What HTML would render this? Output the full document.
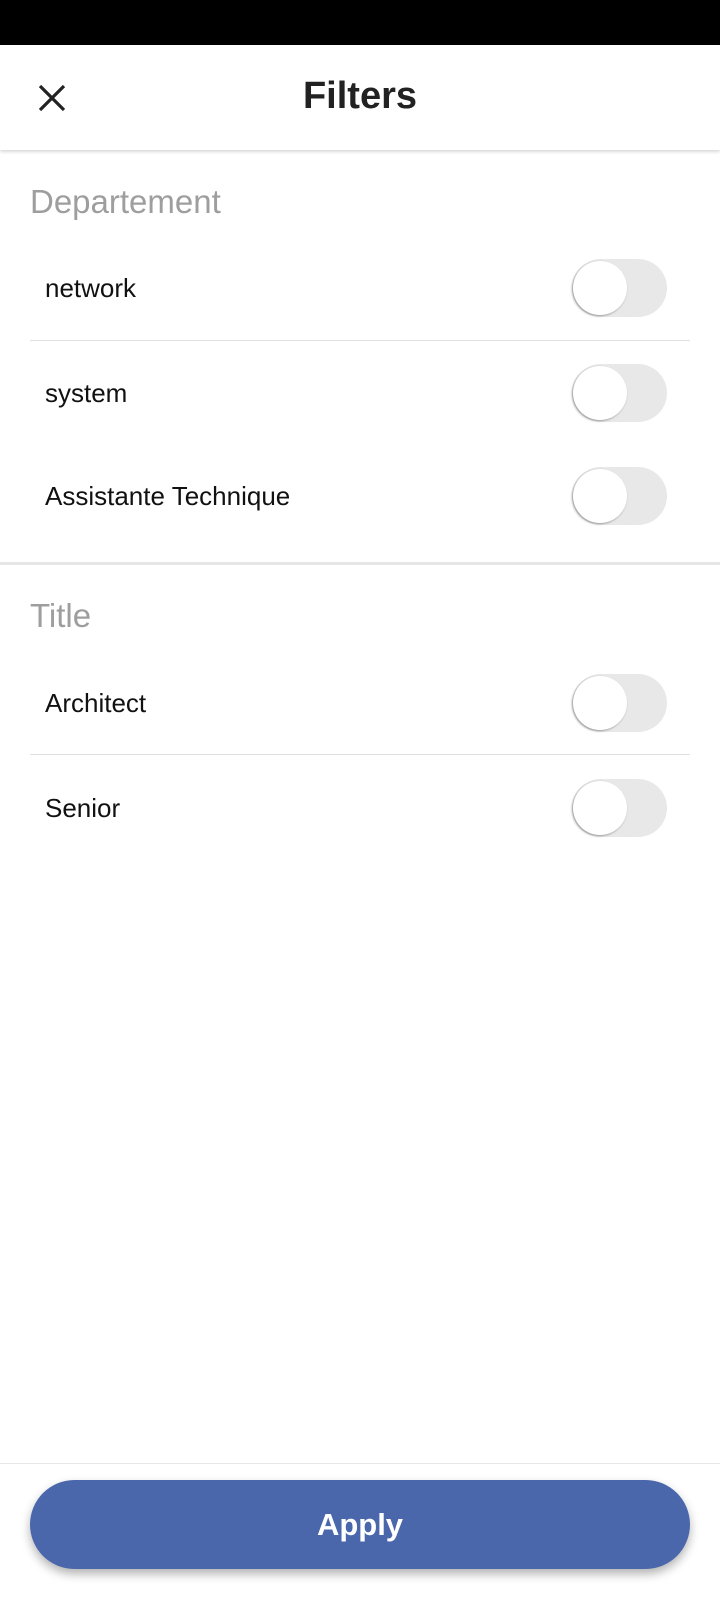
<!DOCTYPE html>
<html><head><style>
body{margin:0;width:720px;height:1600px;background:#fff;font-family:"Liberation Sans",sans-serif;position:relative;overflow:hidden}
.abs{position:absolute}
.status{left:0;top:0;width:720px;height:45px;background:#000}
.header{left:0;top:45px;width:720px;height:105px;background:#fff;box-shadow:0 2px 3px rgba(0,0,0,.15)}
.title{left:0;width:720px;top:72px;text-align:center;font-size:38px;font-weight:bold;color:#222;line-height:48px}
.sec{left:30px;font-size:33px;color:#9e9e9e;line-height:40px}
.row{left:45px;font-size:26px;color:#111;line-height:30px}
.div{left:30px;width:660px;height:1px;background:#e0e0e0}
.tog{left:572px;width:95px;height:58px;border-radius:29px;background:#e8e8e8}
.tog:after{content:"";position:absolute;left:1px;top:2px;width:54px;height:54px;border-radius:50%;background:#fff;box-shadow:-1px 1px 2px rgba(0,0,0,.35)}
.btn{left:30px;top:1480px;width:660px;height:89px;border-radius:45px;background:#4a67ab;box-shadow:0 5px 10px rgba(0,0,0,.3);color:#fff;font-size:31px;font-weight:bold;text-align:center;line-height:89px}
</style></head><body>
<div class="abs status"></div>
<div class="abs header"></div>
<svg class="abs" style="left:36px;top:82px" width="32" height="32" viewBox="0 0 32 32"><path d="M4 4L28 28M28 4L4 28" stroke="#222" stroke-width="3.2" fill="none"/></svg>
<div class="abs title">Filters</div>
<div class="abs sec" style="top:182px">Departement</div>
<div class="abs row" style="top:273px">network</div>
<div class="abs tog" style="top:259px"></div>
<div class="abs div" style="top:340px"></div>
<div class="abs row" style="top:378px">system</div>
<div class="abs tog" style="top:364px"></div>
<div class="abs row" style="top:481px">Assistante Technique</div>
<div class="abs tog" style="top:467px"></div>
<div class="abs" style="left:0;top:562px;width:720px;height:3px;background:#e6e6e6"></div>
<div class="abs sec" style="top:596px">Title</div>
<div class="abs row" style="top:688px">Architect</div>
<div class="abs tog" style="top:674px"></div>
<div class="abs div" style="top:754px"></div>
<div class="abs row" style="top:793px">Senior</div>
<div class="abs tog" style="top:779px"></div>
<div class="abs" style="left:0;top:1463px;width:720px;height:1px;background:#e8e8e8"></div>
<div class="abs btn">Apply</div>
</body></html>
